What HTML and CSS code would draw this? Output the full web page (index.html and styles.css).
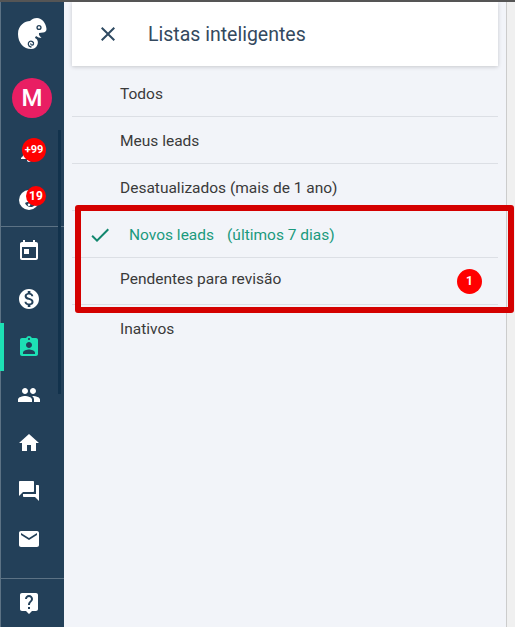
FILE: index.html

```html
<!DOCTYPE html>
<html lang="pt-BR">
<head>
  <meta charset="UTF-8">
  <title>Listas inteligentes</title>
  <link rel="stylesheet" href="styles.css">
</head>

<body>

  <div class="app">
    <div class="sidebar">
      <div class="logo">
        <svg viewBox="0 0 30 32" width="30" height="32">
          <path class="fill-white" d="M20 0C25 0 29 5 29.500 11 29.500 13 28 14.500 26 14.500L22 15C21.500 17 23 18.500 24.500 20L21.500 19.500 19 18C18.500 19 18 19.500 18 20 20.500 21 21.500 24 20.500 26.500 19.500 29.500 17 31 14 31 7 31 1 25 1 16 1 7 8 3 13 3 15 1 17 0 20 0Z"/>
          <circle class="fill-navy" cx="22" cy="9.500" r="2.600"/>
          <circle class="fill-white" cx="22" cy="9.500" r="1.200"/>
          <path class="stroke-navy" d="M14 29C11 28.500 10.500 25 12.500 23.500 14.500 22.500 17 24 16.500 26 16 27.500 14 27.500 13.800 26"/>
        </svg>
      </div>

      <div class="avatar-row">
        <div class="avatar">M</div>
      </div>

      <div class="item">
        <svg class="icon" viewBox="0 0 24 24"><path d="M12 22c1.1 0 2-.9 2-2h-4c0 1.1.89 2 2 2zm6-6v-5c0-3.07-1.64-5.64-4.5-6.32V4c0-.83-.67-1.5-1.5-1.5s-1.5.67-1.5 1.5v.68C7.63 5.36 6 7.92 6 11v5l-2 2v1h16v-1l-2-2z"/></svg>
        <span class="badge badge-wide">+99</span>
      </div>
      <div class="item">
        <svg class="icon" viewBox="0 0 24 24"><path d="M12 2a10 10 0 1 0 0 20 10 10 0 0 0 0-20z"/><path class="fill-navy" d="M8 15c2-1.500 4-1 5-.5s4 1 7-1c-1 3-3 5-5 5.500-3 .5-6-1-7-4z"/><circle cx="12" cy="16.800" r="1.300"/></svg>
        <span class="badge">19</span>
      </div>

      <div class="divider first"></div>

      <div class="item">
        <svg class="icon" viewBox="0 0 24 24"><path d="M19 3h-1V1h-2v2H8V1H6v2H5c-1.110 0-1.990.9-1.990 2L3 19c0 1.100.89 2 2 2h14c1.100 0 2-.9 2-2V5c0-1.100-.9-2-2-2zm0 16H5V8h14v11zM7 10h5v5H7z"/></svg>
      </div>
      <div class="item">
        <svg class="icon" viewBox="0 0 24 24"><path d="M12 2C6.480 2 2 6.480 2 12s4.480 10 10 10 10-4.480 10-10S17.520 2 12 2zm1.410 16.090V20h-2.670v-1.930c-1.710-.36-3.160-1.460-3.270-3.400h1.960c.1 1.050.82 1.870 2.650 1.870 1.960 0 2.400-.98 2.400-1.590 0-.83-.44-1.610-2.670-2.140-2.480-.6-4.180-1.620-4.180-3.670 0-1.720 1.390-2.840 3.110-3.210V4h2.670v1.950c1.860.45 2.790 1.860 2.870 3.390H14.300c-.05-1.110-.64-1.870-2.220-1.870-1.500 0-2.400.68-2.400 1.640 0 .84.65 1.390 2.670 1.910s4.180 1.390 4.180 3.910c-.01 1.830-1.380 2.830-3.120 3.160z"/></svg>
      </div>
      <div class="item active">
        <svg class="icon" viewBox="0 0 24 24"><path d="M19 3h-4.180C14.400 1.840 13.300 1 12 1c-1.300 0-2.400.84-2.820 2H5c-1.100 0-2 .9-2 2v14c0 1.100.9 2 2 2h14c1.100 0 2-.9 2-2V5c0-1.100-.9-2-2-2zm-7 0c.55 0 1 .45 1 1s-.45 1-1 1-1-.45-1-1 .45-1 1-1zm0 4c1.660 0 3 1.340 3 3s-1.340 3-3 3-3-1.340-3-3 1.340-3 3-3zm6 12H6v-1.400c0-2 4-3.100 6-3.100s6 1.100 6 3.100V19z"/></svg>
      </div>
      <div class="item">
        <svg class="icon" viewBox="0 0 24 24"><path d="M16 11c1.660 0 2.990-1.340 2.990-3S17.660 5 16 5c-1.660 0-3 1.340-3 3s1.340 3 3 3zm-8 0c1.660 0 2.990-1.340 2.990-3S9.660 5 8 5C6.340 5 5 6.340 5 8s1.340 3 3 3zm0 2c-2.330 0-7 1.170-7 3.500V19h14v-2.500c0-2.330-4.670-3.500-7-3.500zm8 0c-.29 0-.62.02-.97.05 1.160.84 1.970 1.970 1.970 3.450V19h6v-2.500c0-2.330-4.670-3.500-7-3.500z"/></svg>
      </div>
      <div class="item">
        <svg class="icon" viewBox="0 0 24 24"><path d="M10 20v-6h4v6h5v-8h3L12 3 2 12h3v8z"/></svg>
      </div>
      <div class="item">
        <svg class="icon" viewBox="0 0 24 24"><path d="M21 6h-2v9H6v2c0 .55.45 1 1 1h11l4 4V7c0-.55-.45-1-1-1zm-4 6V3c0-.55-.45-1-1-1H3c-.55 0-1 .45-1 1v14l4-4h10c.55 0 1-.45 1-1z"/></svg>
      </div>
      <div class="item">
        <svg class="icon" viewBox="0 0 24 24"><path d="M20 4H4c-1.100 0-1.990.9-1.990 2L2 18c0 1.100.9 2 2 2h16c1.100 0 2-.9 2-2V6c0-1.100-.9-2-2-2zm0 4l-8 5-8-5V6l8 5 8-5v2z"/></svg>
      </div>

      <div class="spacer"></div>
      <div class="divider"></div>

      <div class="item">
        <svg class="icon" viewBox="0 0 24 24"><path d="M19 2H5c-1.110 0-2 .9-2 2v14c0 1.100.89 2 2 2h4l3 3 3-3h4c1.100 0 2-.9 2-2V4c0-1.100-.9-2-2-2zm-6 16h-2v-2h2v2zm2.070-7.750l-.9.92C13.450 11.900 13 12.500 13 14h-2v-.5c0-1.100.45-2.100 1.170-2.830l1.240-1.260c.37-.36.59-.86.59-1.410 0-1.100-.9-2-2-2s-2 .9-2 2H8c0-2.210 1.790-4 4-4s4 1.790 4 4c0 .88-.36 1.680-.93 2.250z"/></svg>
      </div>

      <div class="scroll-thumb"></div>
    </div>

    <div class="panel">
      <div class="panel-header">
        <svg class="close" viewBox="0 0 24 24"><path d="M19 6.410 17.590 5 12 10.590 6.410 5 5 6.410 10.590 12 5 17.590 6.410 19 12 13.410 17.590 19 19 17.590 13.410 12z"/></svg>
        <h2>Listas inteligentes</h2>
      </div>

      <ul class="lista">
        <li>Todos</li>
        <li>Meus leads</li>
        <li>Desatualizados (mais de 1 ano)</li>
        <li class="selected">
          <svg class="check" viewBox="0 0 24 24"><path d="M9 16.170 4.830 12l-1.420 1.410L9 19 21 7l-1.410-1.410z"/></svg>
          <span>Novos leads</span>
          <span class="extra">(últimos 7 dias)</span>
        </li>
        <li class="with-count">
          <span class="raised">Pendentes para revisão</span>
          <span class="count">1</span>
        </li>
        <li class="last">Inativos</li>
      </ul>
    </div>

    <div class="gutter"></div>
  </div>

  <div class="highlight"></div>

</body>
</html>
```

FILE: styles.css

```css
html, body {
  margin: 0;
  padding: 0;
  height: 100%;
  overflow: hidden;
}

body {
  font-family: 'Roboto', sans-serif;
  background: #f2f4f9;
  border-top: 2px solid #555;
  box-sizing: border-box;
}

.app {
  display: flex;
  height: 625px;
}

.sidebar {
  position: relative;
  width: 64px;
  flex-shrink: 0;
  box-sizing: border-box;
  padding-right: 6px;
  display: flex;
  flex-direction: column;
  background: #234059;
  box-shadow: inset 1px 0 0 #5c7284;
}

.logo {
  height: 64px;
  padding-left: 6px;
  display: flex;
  align-items: center;
  justify-content: center;
}

.fill-white {
  fill: #fff;
}

.fill-navy {
  fill: #234059;
}

.stroke-navy {
  fill: none;
  stroke: #234059;
  stroke-width: 1.300;
  stroke-linecap: round;
}

.avatar-row {
  height: 62px;
  padding-left: 6px;
  display: flex;
  align-items: center;
  justify-content: center;
}

.avatar {
  width: 40px;
  height: 40px;
  margin-top: 2px;
  border-radius: 50%;
  background: #e91e63;
  color: #fff;
  font-size: 24px;
  font-weight: 500;
  line-height: 40px;
  text-align: center;
}

.item {
  position: relative;
  height: 48px;
  flex-shrink: 0;
  display: flex;
  align-items: center;
  justify-content: center;
}

.icon {
  width: 24px;
  height: 24px;
  fill: #fff;
}

.icon .fill-navy {
  fill: #234059;
}

.item.active .icon {
  fill: #1de0b5;
}

.item.active::before {
  content: "";
  position: absolute;
  left: 0;
  top: 0;
  width: 4px;
  height: 48px;
  background: #1de0b5;
}

.badge {
  position: absolute;
  top: 10px;
  left: 26px;
  width: 20px;
  height: 20px;
  border-radius: 50%;
  background: #f00;
  color: #fff;
  font-size: 12px;
  font-weight: 700;
  line-height: 20px;
  text-align: center;
}

.badge-wide {
  top: 10px;
  left: 22px;
  width: 24px;
  height: 24px;
  font-size: 11px;
  line-height: 24px;
}

.divider {
  height: 1px;
  flex-shrink: 0;
  background: #5c7284;
  margin-right: -6px;
}

.divider.first {
  margin-top: 2px;
}

.spacer {
  flex: 1;
}

.scroll-thumb {
  position: absolute;
  left: 58px;
  top: 128px;
  width: 3px;
  height: 264px;
  background: #12324c;
}

.panel {
  width: 442px;
  flex-shrink: 0;
  box-sizing: border-box;
  padding: 0 8px;
}

.panel-header {
  height: 64px;
  display: flex;
  align-items: center;
  background: #fff;
  box-shadow: 0 1px 4px rgba(0, 0, 0, 0.18);
}

.close {
  width: 24px;
  height: 24px;
  margin-left: 24px;
  fill: #2f4a62;
}

h2 {
  margin: 0 0 0 28px;
  font-size: 19.500px;
  font-weight: 400;
  color: #34495e;
}

.lista {
  list-style: none;
  margin: 4px 0 0;
  padding: 0;
}

.lista li {
  height: 47px;
  box-sizing: border-box;
  display: flex;
  align-items: center;
  padding: 2px 16px 0 48px;
  border-bottom: 1px solid #dcdfe5;
  font-size: 15.500px;
  color: #3a3a3a;
}

.lista li.selected {
  padding-left: 16px;
  color: #1a9a7d;
}

.check {
  width: 24px;
  height: 24px;
  margin-right: 17px;
  fill: #12876e;
}

.extra {
  margin-left: 13px;
}

.lista li.with-count {
  justify-content: space-between;
  padding-top: 0;
}

.raised {
  margin-top: -4px;
}

.count {
  width: 25px;
  height: 25px;
  border-radius: 50%;
  background: #f00;
  color: #fff;
  font-size: 12px;
  font-weight: 700;
  line-height: 25px;
  text-align: center;
}

.lista li.last {
  border-bottom: none;
  padding-top: 0;
}

.gutter {
  flex: 1;
  background: #f0f0f0;
  border-left: 1px solid #ccc;
}

/* marcacao vermelha por cima da lista */
.highlight {
  position: absolute;
  left: 75px;
  top: 205px;
  width: 439px;
  height: 108px;
  box-sizing: border-box;
  border: 6px solid #d40000;
  border-radius: 3px;
}
```
